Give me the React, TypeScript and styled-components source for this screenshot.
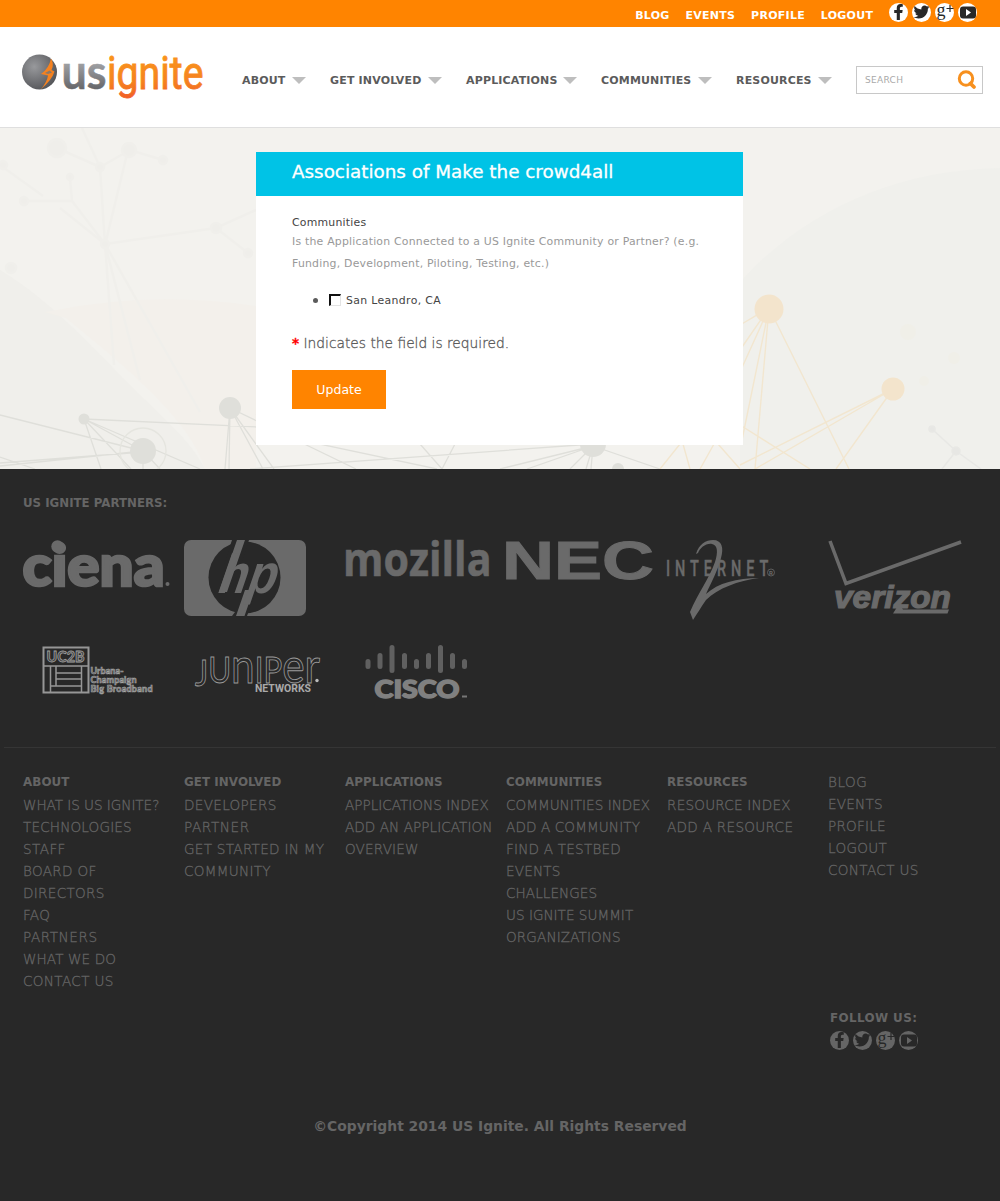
import React from "react";
import styled, { createGlobalStyle, css } from "styled-components";
import { FaFacebookF, FaTwitter } from "react-icons/fa";

const Global = createGlobalStyle`
  * { box-sizing: border-box; }
  body { margin: 0; background: #282828; font-family: "DejaVu Sans", Verdana, sans-serif; font-size: 13.6px; line-height: 22px; color: #5b5b5b; }
  a { color: inherit; text-decoration: none; }
  ul { margin: 0; padding: 0; list-style: none; }
  h1, h2, h3, p { margin: 0; }
`;

const Page = styled.div`
  width: 1000px;
  height: 1201px;
  display: flex;
  flex-direction: column;
  overflow: hidden;
`;

const TopBar = styled.div`
  height: 27px;
  flex: none;
  background: #ff8400;
  display: flex;
  justify-content: flex-end;
  align-items: flex-start;
  padding-right: 23px;
`;

const TopLinks = styled.ul`
  display: flex;
  gap: 15.75px;
  padding-top: 6px;
  margin-right: 15.75px;
  color: #fff;
  font-size: 11px;
  letter-spacing: 0.28px;
  font-weight: bold;
  line-height: 20px;
`;

const Social = styled.div<{ $top: number }>`
  display: flex;
  gap: 4px;
  padding-top: ${(p) => p.$top}px;
`;

const Badge = styled.svg`
  display: block;
  width: 19px;
  height: 19px;
  overflow: visible;
`;

const Header = styled.header`
  height: 101px;
  flex: none;
  background: #fff;
  border-bottom: 1px solid #dfdfdf;
  display: flex;
  align-items: flex-start;
  padding-left: 20px;
`;

const Logo = styled.svg`
  width: 190px;
  height: 60px;
  margin-top: 20px;
  flex: none;
  overflow: visible;
`;

const Nav = styled.nav`
  display: flex;
  gap: 24px;
  margin: 43px 0 0 32px;
`;

const NavItem = styled.a<{ $w: number }>`
  display: flex;
  align-items: center;
  justify-content: space-between;
  width: ${(p) => p.$w}px;
  font-size: 11px;
  letter-spacing: 0.17px;
  font-weight: bold;
  line-height: 22px;
  height: 21px;
  color: #5b5b5b;
  white-space: nowrap;
  &::after {
    content: "";
    border: 7px solid transparent;
    border-top-color: #bebebe;
    border-bottom: 0;
  }
`;

const Search = styled.div`
  width: 127px;
  height: 28px;
  margin: 39px 0 0 24px;
  border: 1px solid #c8c8c8;
  display: flex;
  align-items: center;
  justify-content: space-between;
  padding: 0 5px 0 8px;
  font-size: 9px;
  letter-spacing: 0.3px;
  color: #a9a9a9;
`;

const Main = styled.main`
  position: relative;
  height: 341px;
  flex: none;
  background: #f3f2ee;
  padding: 24px 257px 24px 256px;
`;

const Backdrop = styled.svg`
  position: absolute;
  left: 0;
  top: 0;
`;

const Card = styled.section`
  position: relative;
  height: 293px;
  background: #fff;
`;

const CardTitle = styled.h1`
  height: 44px;
  padding: 8px 36px;
  background: #00c3e6;
  color: #fff;
  font-size: 18.33px;
  font-weight: normal;
  line-height: 24px;
  -webkit-text-stroke: 0.3px #fff;
`;

const Form = styled.div`
  padding: 17px 36px 0;
  display: flex;
  flex-direction: column;
  align-items: flex-start;
`;

const Small = styled.p<{ $color: string; $track?: number }>`
  font-size: 10.88px;
  letter-spacing: ${(p) => p.$track ?? 0.22}px;
  color: ${(p) => p.$color};
  white-space: nowrap;
`;

const Label = styled(Small)`
  line-height: 19px;
  height: 18px;
`;

const Choice = styled.label`
  display: flex;
  align-items: center;
  margin: 15px 0 0 21px;
  height: 22px;
`;

const Bullet = styled.span`
  width: 5px;
  height: 5px;
  border-radius: 50%;
  background: #5b5b5b;
  margin: -1px 11px 0 0;
`;

const Box = styled.span`
  width: 12px;
  height: 12px;
  border: 1px solid #e4e4e4;
  border-top: 2px solid #111;
  border-left: 2px solid #111;
  margin: -3px 5px 0 0;
`;

const Required = styled.p`
  margin-top: 20px;
  font-weight: 200;
  font-size: 13.8px;
  white-space: nowrap;
  -webkit-text-stroke: 0.3px currentColor;
  b { color: #ff0000; font-weight: bold; font-size: 13.6px; }
`;

const Update = styled.button`
  width: 94px;
  height: 39px;
  margin-top: 16px;
  padding: 0;
  border: 0;
  background: #ff8400;
  color: #fff;
  font: 12.5px "DejaVu Sans", sans-serif;
`;

const Footer = styled.footer`
  height: 732px;
  flex: none;
  background: #282828;
  color: #656565;
  display: flex;
  flex-direction: column;
`;

const heading = css`
  font-size: 11.9px;
  font-weight: bold;
  line-height: 22px;
  color: #656565;
  white-space: nowrap;
`;

const PartnersTitle = styled.h2`
  ${heading}
  font-size: 11.8px;
  margin: 23px 0 0 23px;
`;

const Partners = styled.div`
  display: grid;
  grid-template-columns: repeat(6, 161px);
  grid-template-rows: 104px 101px;
  margin: 26px 0 0 23px;
  height: 207px;
`;

const PartnerLogo = styled.svg`
  display: block;
  width: 155px;
  height: 90px;
  overflow: visible;
`;

const Rule = styled.div`
  height: 1px;
  margin: 0 4px;
  background: #353535;
`;

const Columns = styled.div`
  display: grid;
  grid-template-columns: repeat(5, 161px) 160px;
  margin: 23px 0 0 23px;
  height: 223px;
`;

const ColTitle = styled.h3`
  ${heading}
  letter-spacing: 0.06px;
  height: 23px;
`;

const LinkList = styled.ul`
  width: 150px;
  font-weight: 200;
  color: #656565;
  -webkit-text-stroke: 0.3px currentColor;
`;

const LinkItem = styled.li<{ $track: number }>`
  letter-spacing: ${(p) => p.$track}px;
`;

const Follow = styled.div`
  margin: 13px 0 0 830px;
  width: 120px;
`;

const FollowTitle = styled.h3`
  ${heading}
  letter-spacing: 0.4px;
`;

const Copyright = styled.p`
  margin-top: 65px;
  text-align: center;
  font-size: 13.87px;
  font-weight: bold;
`;

const TextMark = styled.text<{ $font: string; $size: number; $weight?: number | string; $italic?: boolean }>`
  font-family: ${(p) => p.$font}, sans-serif;
  font-size: ${(p) => p.$size}px;
  font-weight: ${(p) => p.$weight ?? 700};
  font-style: ${(p) => (p.$italic ? "italic" : "normal")};
`;

function SocialIcons({ disc, ink, top }: { disc: string; ink: string; top: number }) {
  const circle = <circle cx="9.5" cy="9.5" r="9.5" fill={disc} />;
  return (
    <Social $top={top}>
      <Badge>{circle}<FaFacebookF x={4} y={1} size={16} style={{ width: 11 }} color={ink} /></Badge>
      <Badge>{circle}<FaTwitter x={1.5} y={1} size={16} color={ink} /></Badge>
      <Badge>
        {circle}
        <TextMark $font='"Liberation Serif"' $size={18} $weight={400} x="1.5" y="12.5" fill={ink}>g</TextMark>
        <path d="M11.500 5.500h7M15 2v7" stroke={ink} strokeWidth="1.200" />
      </Badge>
      <Badge>
        {circle}
        <rect x="2" y="3.500" width="16" height="12" rx="3" fill={ink} />
        <path d="M8 6l5 3.500-5 3.500z" fill={disc} />
      </Badge>
    </Social>
  );
}

function SiteLogo() {
  return (
    <Logo viewBox="20 47 190 60">
      <defs>
        <radialGradient id="ball" cx=".35" cy=".35" r=".7">
          <stop offset="0" stopColor="#98999c" /><stop offset="1" stopColor="#55565a" />
        </radialGradient>
        <linearGradient id="grey" x1="0" y1="63" x2="0" y2="89" gradientUnits="userSpaceOnUse">
          <stop offset="0" stopColor="#a0a1a4" /><stop offset="1" stopColor="#66676b" />
        </linearGradient>
        <linearGradient id="flame" x1="0" y1="54" x2="0" y2="100" gradientUnits="userSpaceOnUse">
          <stop offset="0" stopColor="#fa951c" /><stop offset=".6" stopColor="#f58220" /><stop offset="1" stopColor="#f15a29" />
        </linearGradient>
      </defs>
      <circle cx="39.500" cy="72" r="17.500" fill="url(#ball)" />
      <path d="M51 58.500Q54.500 64 51.500 70L54.500 71.500Q52 80 41 89Q47 82 48 75.500L41 74Q49 68.500 51 58.500Z" fill="#f58220" />
      <path d="M49.500 70.500l2.500 2-4 1.500-3-1z" fill="#8a7a6a" />
      <TextMark $font="Lato" $size={47} $weight={700} x="61.500" y="88.500" textLength="45" lengthAdjust="spacingAndGlyphs" fill="url(#grey)" stroke="url(#grey)" strokeWidth=".5">us</TextMark>
      <TextMark $font="Roboto" $size={47} $weight={400} x="107" y="88.500" textLength="96.500" lengthAdjust="spacingAndGlyphs" fill="url(#flame)" stroke="url(#flame)" strokeWidth=".9">ignite</TextMark>
    </Logo>
  );
}

const G = "#6a6a6a";

function PartnerLogos() {
  return (
    <Partners>
      <PartnerLogo viewBox="23 540 155 90">
        <TextMark $font="Lato" $size={58} $weight={900} x="22.500" y="586" textLength="142" lengthAdjust="spacingAndGlyphs" fill={G} stroke={G} strokeWidth="2.600">ciena</TextMark>
        <circle cx="57.500" cy="546.500" r="6.200" fill={G} />
        <circle cx="167.500" cy="584" r="2" fill={G} />
      </PartnerLogo>
      <PartnerLogo viewBox="184 540 155 90">
        <rect x="184" y="540" width="122" height="76" rx="7" fill={G} />
        <circle cx="244.500" cy="577.500" r="36" fill="#282828" />
        <path d="M232 540h17l-8 24h-17zM250 592h6l-9 24h-15z" fill="#282828" />
        <path d="M237 540h8L227 592h-8zM245 590h8.500L244.500 616h-8.500z" fill={G} />
        <g transform="translate(215 592.500) skewX(-19)">
          <TextMark $font='"Liberation Sans"' $size={55} x="0" y="0" textLength="58" lengthAdjust="spacingAndGlyphs" fill={G}>hp</TextMark>
        </g>
      </PartnerLogo>
      <PartnerLogo viewBox="345 540 155 90">
        <TextMark $font='"Open Sans"' $size={46} x="343" y="575.500" textLength="148.500" lengthAdjust="spacingAndGlyphs" fill={G} stroke={G} strokeWidth=".6">mozilla</TextMark>
      </PartnerLogo>
      <PartnerLogo viewBox="506 540 155 90">
        <TextMark $font='"Liberation Sans"' $size={54} x="502" y="579" textLength="152" lengthAdjust="spacingAndGlyphs" fill={G} stroke={G} strokeWidth="1">NEC</TextMark>
      </PartnerLogo>
      <PartnerLogo viewBox="667 540 155 90">
        <g transform="translate(666 575.500) scale(.66 1)">
          <TextMark $font="Roboto" $size={22} $weight={500} x="0" y="0" textLength="155" fill={G} stroke={G} strokeWidth=".4">INTERNET</TextMark>
        </g>
        <path d="M696 554C699 544 706 540 713 540C722 540 724 548 721 558C718 570 711 583 706 594C718 583 737 578 759 578C738 581 718 588 706 600C701 607 697 614 693 620L690 612C698 593 709 579 715 562C718 553 718 545 712 544C706 543 700 548 698 553Z" fill={G} />
        <circle cx="771" cy="572.500" r="3.500" fill="none" stroke={G} strokeWidth=".8" />
        <TextMark $font="Roboto" $size={6} x="769" y="574.500" fill={G}>R</TextMark>
      </PartnerLogo>
      <PartnerLogo viewBox="828 540 155 90">
        <path d="M830 541L846 583.500L961 542" fill="none" stroke={G} strokeWidth="3.500" />
        <TextMark $font='"Liberation Sans"' $size={32} $italic x="834" y="607.500" textLength="117" lengthAdjust="spacingAndGlyphs" fill={G} stroke={G} strokeWidth="1.200">verizon</TextMark>
        <path d="M899 604L893 613.500H947.500L949 609.500H903z" fill={G} />
      </PartnerLogo>
      <PartnerLogo viewBox="23 644 155 90">
        <g fill="none" stroke="#969696" strokeWidth="2">
          <rect x="43.500" y="647.500" width="45" height="45" />
          <path d="M43 666h46M50.500 666v27M56 666v20M81.500 666v27M56 673h25M56 679h25M50 686h31" strokeWidth="1.500" />
        </g>
        <TextMark $font="Lato" $size={15} $weight={900} x="46.500" y="662" textLength="38" lengthAdjust="spacingAndGlyphs" fill="#444" stroke="#a0a0a0" strokeWidth=".8">UC2B</TextMark>
        <g fill="#555" stroke="#a8a8a8" strokeWidth=".6">
          <TextMark $font="Lato" $size={9} x="90.500" y="674" textLength="33">Urbana-</TextMark>
          <TextMark $font="Lato" $size={9} x="90.500" y="683" textLength="46">Champaign</TextMark>
          <TextMark $font="Lato" $size={9} x="90.500" y="692" textLength="62">Big Broadband</TextMark>
        </g>
      </PartnerLogo>
      <PartnerLogo viewBox="184 644 155 90">
        <TextMark $font="Lato" $size={36} $weight={400} x="195" y="683" textLength="125" lengthAdjust="spacingAndGlyphs" fill="#282828" stroke="#9a9a9a" strokeWidth=".9">
          <tspan dy="3">J</tspan><tspan dy="-3">U</tspan><tspan fontSize="49">n</tspan>IP<tspan fontSize="49">er</tspan>
        </TextMark>
        <circle cx="317" cy="680.500" r="1.700" fill="#bbb" />
        <TextMark $font="Roboto" $size={10} $weight={700} x="255" y="691.800" textLength="56" lengthAdjust="spacingAndGlyphs" fill="#aaa">NETWORKS</TextMark>
      </PartnerLogo>
      <PartnerLogo viewBox="345 644 155 90">
        <path d="M368 661.500v5M380 655.500v11M392 647.500v23M404.500 655.500v11M416.500 661.500v5M428.500 655.500v11M440.500 647.500v23M452.500 655.500v11M464.500 661.500v5" stroke="#606060" strokeWidth="5" strokeLinecap="round" />
        <TextMark $font="Lato" $size={24} $weight={900} x="374.500" y="697.500" textLength="85" lengthAdjust="spacingAndGlyphs" fill="#808080" stroke="#808080" strokeWidth="1.400">CISCO</TextMark>
        <path d="M462 696.500h5" stroke="#777" strokeWidth="2" />
      </PartnerLogo>
    </Partners>
  );
}

function Network() {
  return (
    <Backdrop width="1000" height="341" viewBox="0 128 1000 341">
      <path d="M0 270C50 300 90 345 130 385S190 440 205 469H0z" fill="#f0efeb" />
      <path d="M45 312Q150 290 256 306V469H205C190 420 130 370 66 318z" fill="#f3f0eb" />
      <path d="M740 282C800 215 890 170 1000 168V469H740z" fill="#f0f0ec" />
      <g stroke="#f0efeb" strokeWidth="2.500" fill="#efeeea">
        <path d="M57 148L100 167L130 150L163 160M82 128L100 167L105 245L128 150M0 165L43 196M23 201H72L70 178M72 201L105 244L60 208M105 244L216 228L256 210M216 228L248 253M105 244L114 365M105 244L140 380M105 244L200 412" fill="none" />
        <circle cx="57" cy="148" r="9" /><circle cx="129" cy="150" r="7" /><circle cx="100" cy="167" r="4" /><circle cx="163" cy="160" r="4" /><circle cx="105" cy="244" r="4" /><circle cx="216" cy="228" r="5" /><circle cx="248" cy="253" r="4" /><circle cx="3" cy="165" r="4" /><circle cx="11" cy="268" r="5" /><circle cx="24" cy="201" r="4" /><circle cx="70" cy="177" r="3" />
      </g>
      <g stroke="#dfdfda" strokeWidth="1.300" fill="none">
        <path d="M0 415L143 451M0 463L143 452M0 457L35 469M0 466L143 451M84 419L258 427M84 419L101 469M84 419L131 469M84 419L143 451M84 419L200 469M143 451L160 469M143 451V469M230 408L225 469M230 408L229 469M230 408L274 469M230 408L263 469M230 408L356 469M256 414L300 440L437 469M250 469L593 444M593 446L500 469M593 446L527 469M593 446L570 469M593 446L586 469M593 446L591 469M593 446L660 469M442 469L420 444M442 469L455 444" />
        <circle cx="143" cy="451" r="23" stroke="#e5e5df" />
      </g>
      <g fill="#dfdfda">
        <circle cx="84" cy="419" r="5.500" /><circle cx="143" cy="451" r="13" /><circle cx="230" cy="408" r="11" /><circle cx="593" cy="444" r="13" /><circle cx="618" cy="469" r="6" />
      </g>
      <g stroke="#f2e6cf" strokeWidth="1.400" fill="none">
        <path d="M769 308L740 325M769 308L740 350M769 308L740 372M769 308L742 440M769 308L755 469M769 308L849 469M893 389L740 465M893 389L755 469M893 389L836 469M740 425L810 469M680 444L660 469M683 444L690 469M700 469L714 444M740 469L718 444M736 444L742 425" />
      </g>
      <g fill="#f3e4cc"><circle cx="769" cy="309" r="14.500" /><circle cx="893" cy="389" r="11.500" /></g>
      <g stroke="#e8e8e5" fill="#e7e7e4" strokeWidth="1.500"><path d="M932 429L956 451L942 469M956 451L981 469" fill="none" /><circle cx="932" cy="429" r="3" /><circle cx="956" cy="451" r="4" /></g>
      <g fill="#f0efe8"><circle cx="908" cy="332" r="8" /><circle cx="954" cy="358" r="6" /><circle cx="924" cy="381" r="5" /></g>
    </Backdrop>
  );
}

const nav: [string, number][] = [["ABOUT", 64], ["GET INVOLVED", 112], ["APPLICATIONS", 111], ["COMMUNITIES", 111], ["RESOURCES", 96]];

type Link = [label: string, track: number];

const columns: { title?: string; links: Link[] }[] = [
  { title: "ABOUT", links: [["WHAT IS US IGNITE?", -0.05], ["TECHNOLOGIES", 0.15], ["STAFF", 0.4], ["BOARD OF DIRECTORS", 0.3], ["FAQ", 0.3], ["PARTNERS", 0.55], ["WHAT WE DO", 0.1], ["CONTACT US", 0.33]] },
  { title: "GET INVOLVED", links: [["DEVELOPERS", 0.3], ["PARTNER", 0.6], ["GET STARTED IN MY COMMUNITY", 0.28]] },
  { title: "APPLICATIONS", links: [["APPLICATIONS INDEX", 0], ["ADD AN APPLICATION", 0.05], ["OVERVIEW", 0.15]] },
  { title: "COMMUNITIES", links: [["COMMUNITIES INDEX", 0], ["ADD A COMMUNITY", 0.1], ["FIND A TESTBED", 0.2], ["EVENTS", 0.15], ["CHALLENGES", 0.05], ["US IGNITE SUMMIT", 0], ["ORGANIZATIONS", 0.1]] },
  { title: "RESOURCES", links: [["RESOURCE INDEX", 0.2], ["ADD A RESOURCE", 0.28]] },
  { links: [["BLOG", 0.5], ["EVENTS", 0.2], ["PROFILE", 0.2], ["LOGOUT", 0.3], ["CONTACT US", 0.33]] },
];

export default function App() {
  return (
    <Page>
      <Global />
      <TopBar>
        <TopLinks>
          {["BLOG", "EVENTS", "PROFILE", "LOGOUT"].map((t) => <li key={t}><a href="#">{t}</a></li>)}
        </TopLinks>
        <SocialIcons disc="#fff" ink="#282828" top={3} />
      </TopBar>
      <Header>
        <SiteLogo />
        <Nav>{nav.map(([t, w]) => <NavItem key={t} $w={w} href="#">{t}</NavItem>)}</Nav>
        <Search>
          SEARCH
          <svg width="20" height="20" fill="none" stroke="#f7901e">
            <circle cx="9" cy="8.500" r="6.700" strokeWidth="3" /><path d="M13.500 13.500l3.500 3.500" strokeWidth="3.800" strokeLinecap="round" />
          </svg>
        </Search>
      </Header>
      <Main>
        <Network />
        <Card>
          <CardTitle>Associations of Make the crowd4all</CardTitle>
          <Form>
            <Label $color="#444">Communities</Label>
            <Small $color="#999">Is the Application Connected to a US Ignite Community or Partner? (e.g.<br />Funding, Development, Piloting, Testing, etc.)</Small>
            <Choice><Bullet /><Box /><Small as="span" $color="#444" $track={0.35}>San Leandro, CA</Small></Choice>
            <Required><b>*</b> Indicates the field is required.</Required>
            <Update>Update</Update>
          </Form>
        </Card>
      </Main>
      <Footer>
        <PartnersTitle>US IGNITE PARTNERS:</PartnersTitle>
        <PartnerLogos />
        <Rule />
        <Columns>
          {columns.map((c, i) => (
            <div key={i}>
              {c.title && <ColTitle>{c.title}</ColTitle>}
              <LinkList>{c.links.map(([l, t]) => <LinkItem key={l} $track={t}><a href="#">{l}</a></LinkItem>)}</LinkList>
            </div>
          ))}
        </Columns>
        <Follow>
          <FollowTitle>FOLLOW US:</FollowTitle>
          <SocialIcons disc="#656565" ink="#282828" top={2} />
        </Follow>
        <Copyright>©Copyright 2014 US Ignite. All Rights Reserved</Copyright>
      </Footer>
    </Page>
  );
}
